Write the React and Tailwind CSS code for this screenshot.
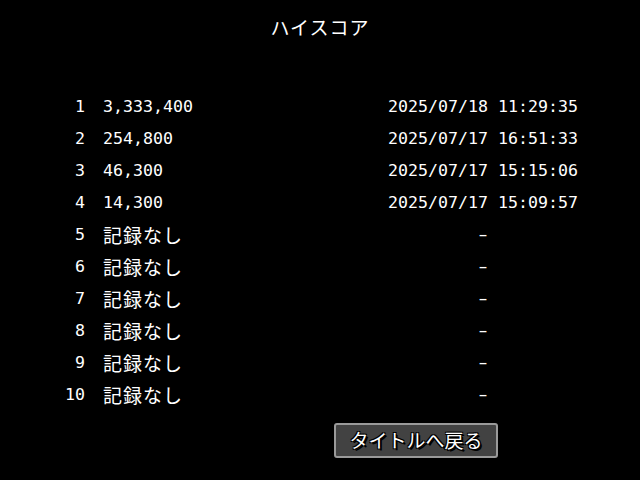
import React from "react";

const rows = [
  { score: "3,333,400", date: "2025/07/18 11:29:35" },
  { score: "254,800", date: "2025/07/17 16:51:33" },
  { score: "46,300", date: "2025/07/17 15:15:06" },
  { score: "14,300", date: "2025/07/17 15:09:57" },
  { score: null, date: null },
  { score: null, date: null },
  { score: null, date: null },
  { score: null, date: null },
  { score: null, date: null },
  { score: null, date: null },
];

const mono = "font-['DejaVu_Sans_Mono','Liberation_Mono',monospace] text-[16.6px]";
const jp = "font-['Noto_Sans_CJK_JP',sans-serif] text-[19px]";

export default function App() {
  return (
    <div className="w-[640px] h-[480px] bg-black text-white flex flex-col overflow-hidden">
      <div className={`h-[54px] flex items-center justify-center ${jp} tracking-[1px]`}>
        ハイスコア
      </div>
      <div className="mt-[37px] flex flex-col pl-[65px] pr-[61px]">
        {rows.map((r, i) => (
          <div key={i} className="h-[32px] flex items-center">
            <div className={`w-[20px] text-right ${mono}`}>{i + 1}</div>
            <div className="ml-[18px] flex-1">
              {r.score ? (
                <span className={mono}>{r.score}</span>
              ) : (
                <span className={`${jp} tracking-[1px]`}>記録なし</span>
              )}
            </div>
            <div className={`w-[192px] text-center ${mono}`}>
              {r.date ? r.date : <span className="inline-block scale-x-[1.6]">-</span>}
            </div>
          </div>
        ))}
      </div>
      <div className="mt-[12px] ml-[334px]">
        <button className={`w-[164px] h-[35px] rounded-[3px] border-2 border-[#9a9a9a] bg-[#424242] text-white ${jp} flex items-center justify-center [text-shadow:_1px_1px_0_#000,-1px_-1px_0_#000,1px_-1px_0_#000,-1px_1px_0_#000,2px_2px_0_#000]`}>
          タイトルへ戻る
        </button>
      </div>
    </div>
  );
}
